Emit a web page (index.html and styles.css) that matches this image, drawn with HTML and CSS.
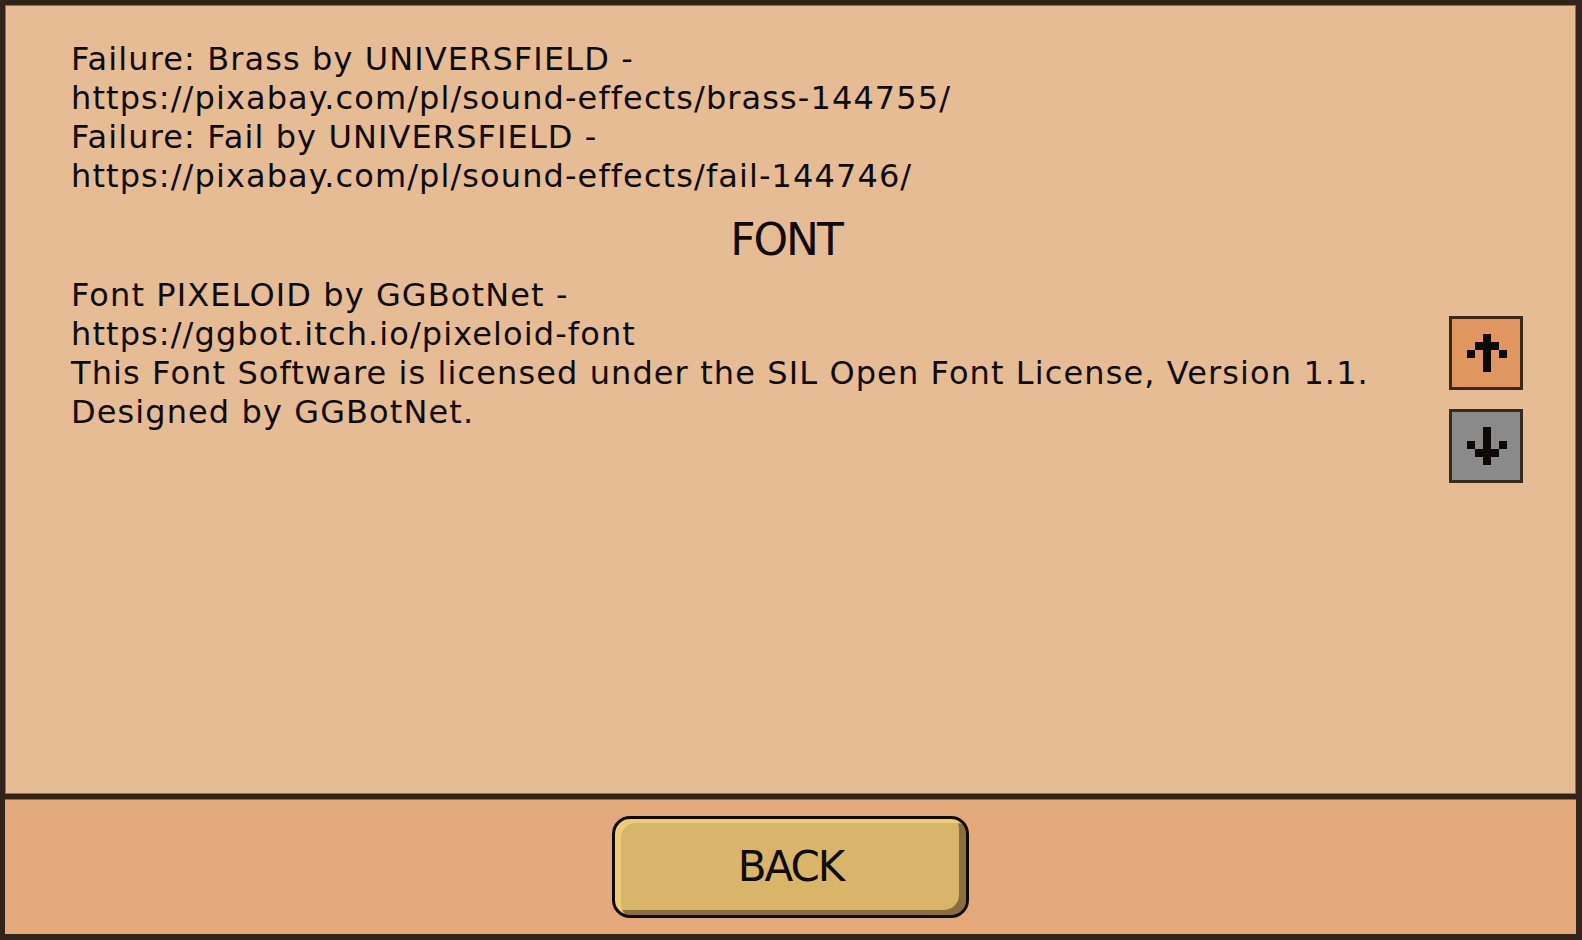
FILE: index.html
```html
<!DOCTYPE html>
<html lang="en">
<head>
<meta charset="utf-8">
<title>Credits</title>
<link rel="stylesheet" href="styles.css">
</head>
<body>
<div class="panel">
  <main class="content">
    <div class="credits">
      <p class="line">Failure: Brass by UNIVERSFIELD -</p>
      <p class="line">https://pixabay.com/pl/sound-effects/brass-144755/</p>
      <p class="line">Failure: Fail by UNIVERSFIELD -</p>
      <p class="line">https://pixabay.com/pl/sound-effects/fail-144746/</p>
      <h2 class="heading">FONT</h2>
      <p class="line">Font PIXELOID by GGBotNet -</p>
      <p class="line">https://ggbot.itch.io/pixeloid-font</p>
      <p class="line">This Font Software is licensed under the SIL Open Font License, Version 1.1.</p>
      <p class="line">Designed by GGBotNet.</p>
    </div>
    <div class="scroll">
      <button class="scroll-btn up" aria-label="Scroll up">
        <svg viewBox="0 0 68 68" width="68" height="68" shape-rendering="crispEdges">
          <rect x="31" y="15" width="8" height="38" fill="#0c0906"/>
          <rect x="23" y="23" width="24" height="8" fill="#0c0906"/>
          <rect x="15" y="31" width="8" height="8" fill="#0c0906"/>
          <rect x="47" y="31" width="8" height="8" fill="#0c0906"/>
        </svg>
      </button>
      <button class="scroll-btn down" aria-label="Scroll down">
        <svg viewBox="0 0 68 68" width="68" height="68" shape-rendering="crispEdges">
          <rect x="31" y="15" width="8" height="38" fill="#0c0906"/>
          <rect x="23" y="37" width="24" height="8" fill="#0c0906"/>
          <rect x="15" y="29" width="8" height="8" fill="#0c0906"/>
          <rect x="47" y="29" width="8" height="8" fill="#0c0906"/>
        </svg>
      </button>
    </div>
  </main>
  <footer class="footer">
    <button class="back-btn">BACK</button>
  </footer>
</div>
</body>
</html>
```

FILE: styles.css
```css
* {
  box-sizing: border-box;
}

html, body {
  margin: 0;
  padding: 0;
  width: 1582px;
  height: 940px;
  overflow: hidden;
  background: #30231a;
}

.panel {
  width: 1582px;
  height: 940px;
  border-style: solid;
  border-color: #30231a;
  border-width: 5px 6px 6px 5px;
  display: flex;
  flex-direction: column;
  font-family: "DejaVu Sans", "Liberation Sans", sans-serif;
  color: #0f0b08;
}

.content {
  position: relative;
  flex: 1;
  background: #e6bc94;
  box-shadow: inset 1px 1px 0 #8f6f52, inset -1px -1px 0 #8f6f52;
  overflow: hidden;
}

.credits {
  padding: 35px 75px 0 66px;
}

.line {
  margin: 0;
  font-size: 32px;
  line-height: 39px;
  letter-spacing: 1.1px;
  white-space: nowrap;
}

.heading {
  margin: 18px 0 10px;
  font-size: 44px;
  line-height: 52px;
  font-weight: normal;
  letter-spacing: -2px;
  text-align: center;
}

.scroll {
  position: absolute;
  right: 53px;
  top: 311px;
  display: flex;
  flex-direction: column;
  gap: 19px;
}

.scroll-btn {
  width: 74px;
  height: 74px;
  padding: 0;
  border: 3px solid #3a2a1b;
  display: block;
  cursor: pointer;
}

.scroll-btn svg {
  display: block;
}

.scroll-btn.up {
  background: #e0965f;
}

.scroll-btn.down {
  background: #8a8a8a;
}

.footer {
  height: 140px;
  border-top: 5px solid #30231a;
  background: #e2aa7a;
  box-shadow: inset 0 1px 0 #8f6a4a;
  display: flex;
  align-items: center;
  justify-content: center;
}

.back-btn {
  width: 357px;
  height: 102px;
  border: 3px solid #0d0a06;
  border-radius: 18px;
  background: #d9b56a;
  box-shadow: inset 6px 4px 0 #eecb78, inset -7px -5px 0 #8a6e3f;
  font-family: "DejaVu Sans", "Liberation Sans", sans-serif;
  font-size: 42px;
  letter-spacing: -2px;
  color: #0f0b08;
  padding: 0;
  cursor: pointer;
}
```
